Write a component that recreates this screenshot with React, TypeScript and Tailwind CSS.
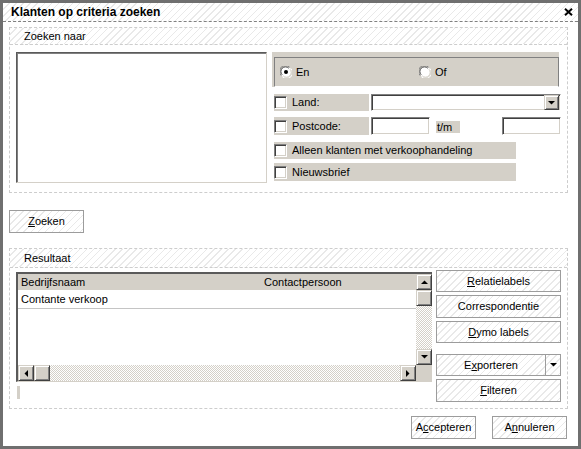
import React from "react";

const hatch =
  "bg-[repeating-linear-gradient(135deg,#ffffff_0px,#ffffff_4px,#e9e9e9_4px,#e9e9e9_5px)]";
const sunken =
  "bg-white border border-t-[#808080] border-l-[#808080] border-b-white border-r-white shadow-[inset_1px_1px_0_#404040,inset_-1px_-1px_0_#d4d0c8]";
const raised =
  "bg-[#d4d0c8] border border-t-[#d4d0c8] border-l-[#d4d0c8] border-b-[#404040] border-r-[#404040] shadow-[inset_1px_1px_0_#ffffff,inset_-1px_-1px_0_#808080]";
const checker =
  "bg-[repeating-conic-gradient(#d4d0c8_0%_25%,#ffffff_0%_50%)] bg-[length:2px_2px]";
const btn =
  "flex items-center justify-center border border-[#9c9c9c] bg-[repeating-linear-gradient(135deg,#ffffff_0px,#ffffff_4px,#e9e9e9_4px,#e9e9e9_5px)]";

function Check() {
  return <div className={`w-[13px] h-[13px] shrink-0 ${sunken}`} />;
}

function Radio({ on }: { on?: boolean }) {
  return (
    <svg width="12" height="12" viewBox="0 0 12 12" className="shrink-0">
      <circle cx="6" cy="6" r="5.5" fill="#ffffff" />
      <path d="M1.2 9.6 A5.5 5.5 0 0 1 9.6 1.2" fill="none" stroke="#808080" strokeWidth="1" />
      <path d="M2.2 8.8 A4.5 4.5 0 0 1 8.8 2.2" fill="none" stroke="#404040" strokeWidth="1" />
      <path d="M10.8 2.4 A5.5 5.5 0 0 1 2.4 10.8" fill="none" stroke="#ffffff" strokeWidth="1" />
      <path d="M9.8 3.2 A4.5 4.5 0 0 1 3.2 9.8" fill="none" stroke="#d4d0c8" strokeWidth="1" />
      {on && <circle cx="6" cy="6" r="2" fill="#000000" />}
    </svg>
  );
}

function Tri({ dir }: { dir: "up" | "down" | "left" | "right" }) {
  const pts =
    dir === "up"
      ? "0,4 7,4 3.5,0.5"
      : dir === "down"
      ? "0,0 7,0 3.5,3.5"
      : dir === "left"
      ? "4,0 4,7 0.5,3.5"
      : "0,0 0,7 3.5,3.5";
  const w = dir === "up" || dir === "down" ? 7 : 4;
  const h = dir === "up" || dir === "down" ? 4 : 7;
  return (
    <svg width={w} height={h} viewBox={`0 0 ${w} ${h}`}>
      <polygon points={pts} fill="#000000" />
    </svg>
  );
}

function U({ children }: { children: React.ReactNode }) {
  return <span className="underline underline-offset-[1px]">{children}</span>;
}

export default function App() {
  return (
    <div className="w-[581px] h-[449px] border-[3px] border-[#6f6f6f] bg-white flex flex-col font-['Liberation_Sans',Arial,sans-serif] text-[11px] leading-none text-black overflow-hidden">
      {/* Title bar */}
      <div className={`h-[19px] shrink-0 border-b border-dashed border-[#808080] flex items-center justify-between pl-[8px] pr-[5px] ${hatch}`}>
        <span className="font-bold text-[12px]">Klanten op criteria zoeken</span>
        <svg width="9" height="8" viewBox="0 0 9 8">
          <path d="M1 0.8 L8 7.2 M8 0.8 L1 7.2" stroke="#000000" strokeWidth="2" />
        </svg>
      </div>

      <div className="flex flex-col pl-[6px] pr-[10px] pt-[5px]">
        {/* Zoeken naar group */}
        <div className="h-[166px] border border-dashed border-[#cdcdcd] flex flex-col">
          <div className={`h-[17px] shrink-0 border-b border-dashed border-[#cdcdcd] flex items-center pl-[14px] ${hatch}`}>
            Zoeken naar
          </div>
          <div className="flex pl-[6px] pt-[7px] gap-[5px]">
            <div className="w-[251px] h-[131px] bg-white border border-t-[#5a5a5a] border-l-[#5a5a5a] border-b-[#d4d0c8] border-r-[#d4d0c8] shadow-[inset_1px_1px_0_#808080]" />
            <div className="w-[289px] flex flex-col">
              <div className="w-[287px] bg-[#d4d0c8] pt-[5px] pl-[2px]">
                <div className="h-[30px] border border-[#808080] border-b-white flex items-center pl-[5px]">
                  <div className="flex items-center gap-[4px] w-[139px]">
                    <Radio on />
                    <span>En</span>
                  </div>
                  <div className="flex items-center gap-[4px]">
                    <Radio />
                    <span>Of</span>
                  </div>
                </div>
              </div>

              {/* Land */}
              <div className="flex mt-[7px] h-[17px] pl-[2px]">
                <div className="w-[95px] bg-[#d4d0c8] flex items-center gap-[5px]">
                  <Check />
                  <span>Land:</span>
                </div>
                <div className={`ml-[2px] w-[190px] flex justify-end items-center pr-[1px] ${sunken}`}>
                  <div className={`w-[15px] h-[15px] flex items-center justify-center ${raised}`}>
                    <Tri dir="down" />
                  </div>
                </div>
              </div>

              {/* Postcode */}
              <div className="flex mt-[6px] h-[18px] pl-[2px]">
                <div className="w-[95px] bg-[#d4d0c8] flex items-center gap-[5px]">
                  <Check />
                  <span>Postcode:</span>
                </div>
                <div className={`ml-[2px] w-[59px] ${sunken}`} />
                <div className="ml-[6px] w-[24px] h-[12px] self-center mt-[2px] bg-[#d4d0c8] flex items-center pl-[1px]">
                  t/m
                </div>
                <div className={`ml-[42px] w-[59px] ${sunken}`} />
              </div>

              {/* Alleen */}
              <div className="flex mt-[7px] h-[17px] pl-[2px]">
                <div className="w-[242px] bg-[#d4d0c8] flex items-center gap-[5px]">
                  <Check />
                  <span>Alleen klanten met verkoophandeling</span>
                </div>
              </div>

              {/* Nieuwsbrief */}
              <div className="flex mt-[4px] h-[18px] pl-[2px]">
                <div className="w-[242px] bg-[#d4d0c8] flex items-center gap-[5px]">
                  <Check />
                  <span>Nieuwsbrief</span>
                </div>
              </div>
            </div>
          </div>
        </div>

        {/* Zoeken button */}
        <div className={`mt-[17px] w-[75px] h-[23px] ${btn}`}>
          <span>
            <U>Z</U>oeken
          </span>
        </div>

        {/* Resultaat group */}
        <div className="mt-[15px] h-[161px] border border-dashed border-[#cdcdcd] flex flex-col">
          <div className={`h-[19px] shrink-0 border-b border-dashed border-[#cdcdcd] flex items-center pl-[14px] ${hatch}`}>
            Resultaat
          </div>
          <div className="flex pl-[6px] pt-[2px]">
            <div className="flex flex-col mt-[2px]">
              <div className="w-[416px] h-[110px] flex flex-col border-t-2 border-l-2 border-t-[#5a5a5a] border-l-[#5a5a5a] border-b border-b-[#d4d0c8]">
                <div className="flex flex-1 min-h-0">
                  <div className="flex-1 flex flex-col bg-white">
                    <div className="h-[16px] bg-[#d4d0c8] flex items-center">
                      <span className="w-[246px] pl-[3px]">Bedrijfsnaam</span>
                      <span>Contactpersoon</span>
                    </div>
                    <div className="h-[19px] border-b border-[#c4c4c4] flex items-center pl-[3px]">
                      Contante verkoop
                    </div>
                  </div>
                  <div className="w-[16px] flex flex-col">
                    <div className={`h-[16px] flex items-center justify-center ${raised}`}>
                      <Tri dir="up" />
                    </div>
                    <div className={`h-[16px] ${raised}`} />
                    <div className={`flex-1 ${checker}`} />
                    <div className={`h-[16px] flex items-center justify-center ${raised}`}>
                      <Tri dir="down" />
                    </div>
                  </div>
                </div>
                <div className="flex h-[16px]">
                  <div className={`w-[16px] flex items-center justify-center ${raised}`}>
                    <Tri dir="left" />
                  </div>
                  <div className={`w-[16px] ${raised}`} />
                  <div className={`flex-1 ${checker}`} />
                  <div className={`w-[16px] flex items-center justify-center ${raised}`}>
                    <Tri dir="right" />
                  </div>
                  <div className="w-[16px] bg-[#d4d0c8]" />
                </div>
              </div>
              <div className="mt-[4px] ml-[1px] w-[3px] h-[13px] bg-[#d4d0c8]" />
            </div>

            <div className="ml-[4px] w-[125px] flex flex-col gap-[3px]">
              <div className={`h-[22px] ${btn}`}>
                <span>
                  <U>R</U>elatielabels
                </span>
              </div>
              <div className={`h-[23px] ${btn}`}>
                <span>Correspondentie</span>
              </div>
              <div className={`h-[22px] ${btn}`}>
                <span>
                  <U>D</U>ymo labels
                </span>
              </div>
              <div className="h-[22px] mt-[8px] flex border border-[#9c9c9c] bg-[repeating-linear-gradient(135deg,#ffffff_0px,#ffffff_4px,#e9e9e9_4px,#e9e9e9_5px)]">
                <div className="flex-1 flex items-center justify-center border-r border-[#9c9c9c]">
                  <span>
                    E<U>x</U>porteren
                  </span>
                </div>
                <div className="w-[14px] flex items-center justify-center">
                  <Tri dir="down" />
                </div>
              </div>
              <div className={`h-[23px] ${btn}`}>
                <span>
                  <U>F</U>ilteren
                </span>
              </div>
            </div>
          </div>
        </div>

        {/* Bottom buttons */}
        <div className="flex justify-end gap-[16px] mt-[7px] pr-[1px]">
          <div className={`w-[65px] h-[23px] ${btn}`}>
            <span>
              A<U>c</U>cepteren
            </span>
          </div>
          <div className={`w-[75px] h-[23px] ${btn}`}>
            <span>
              A<U>n</U>nuleren
            </span>
          </div>
        </div>
      </div>
    </div>
  );
}
